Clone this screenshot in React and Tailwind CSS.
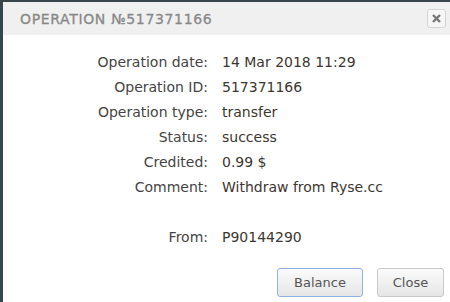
export default function App() {
  const rows = [
    ["Operation date:", "14 Mar 2018 11:29"],
    ["Operation ID:", "517371166"],
    ["Operation type:", "transfer"],
    ["Status:", "success"],
    ["Credited:", "0.99 $"],
    ["Comment:", "Withdraw from Ryse.cc"],
    ["", ""],
    ["From:", "P90144290"],
  ];
  return (
    <div className="w-[450px] h-[302px] bg-[#37464c] pl-[3px] pt-[2px] overflow-hidden" style={{ fontFamily: '"DejaVu Sans", sans-serif' }}>
      <div className="bg-white h-full flex flex-col">
        <div className="h-[33px] bg-[#f0f0f0] flex items-center justify-between pl-[17px] pr-[4px]">
          <span className="text-[14px] font-normal tracking-[0.65px] text-[#888] leading-none [-webkit-text-stroke:0.3px_#888]">OPERATION №517371166</span>
          <button className="w-[19px] h-[19px] rounded-[3px] border border-[#d4d4d4] bg-[#f6f6f6] flex items-center justify-center">
            <svg width="9" height="9" viewBox="0 0 9 9">
              <path d="M1 1L8 8M8 1L1 8" stroke="#777" strokeWidth="2.4" strokeLinecap="butt" />
            </svg>
          </button>
        </div>
        <div className="grid grid-cols-[205px_1fr] gap-x-[14px] pt-[15px] text-[14px] leading-[25px]">
          {rows.map(([l, v], i) => (
            <div key={i} className="contents">
              <div className="text-right text-[#444] h-[25px]">{l}</div>
              <div className="text-[#3d3630] h-[25px]">{v}</div>
            </div>
          ))}
        </div>
        <div className="mt-auto flex justify-end gap-[14px] pr-[6px] pb-[5px]">
          <button className="h-[29px] w-[86px] rounded-[3px] border border-[#8eb2e6] bg-gradient-to-b from-[#fbfbfb] to-[#e6e6e6] text-[13px] text-[#555]">Balance</button>
          <button className="h-[29px] w-[67px] rounded-[3px] border border-[#c9c9c9] bg-gradient-to-b from-[#fbfbfb] to-[#e6e6e6] text-[13px] text-[#555]">Close</button>
        </div>
      </div>
    </div>
  );
}
